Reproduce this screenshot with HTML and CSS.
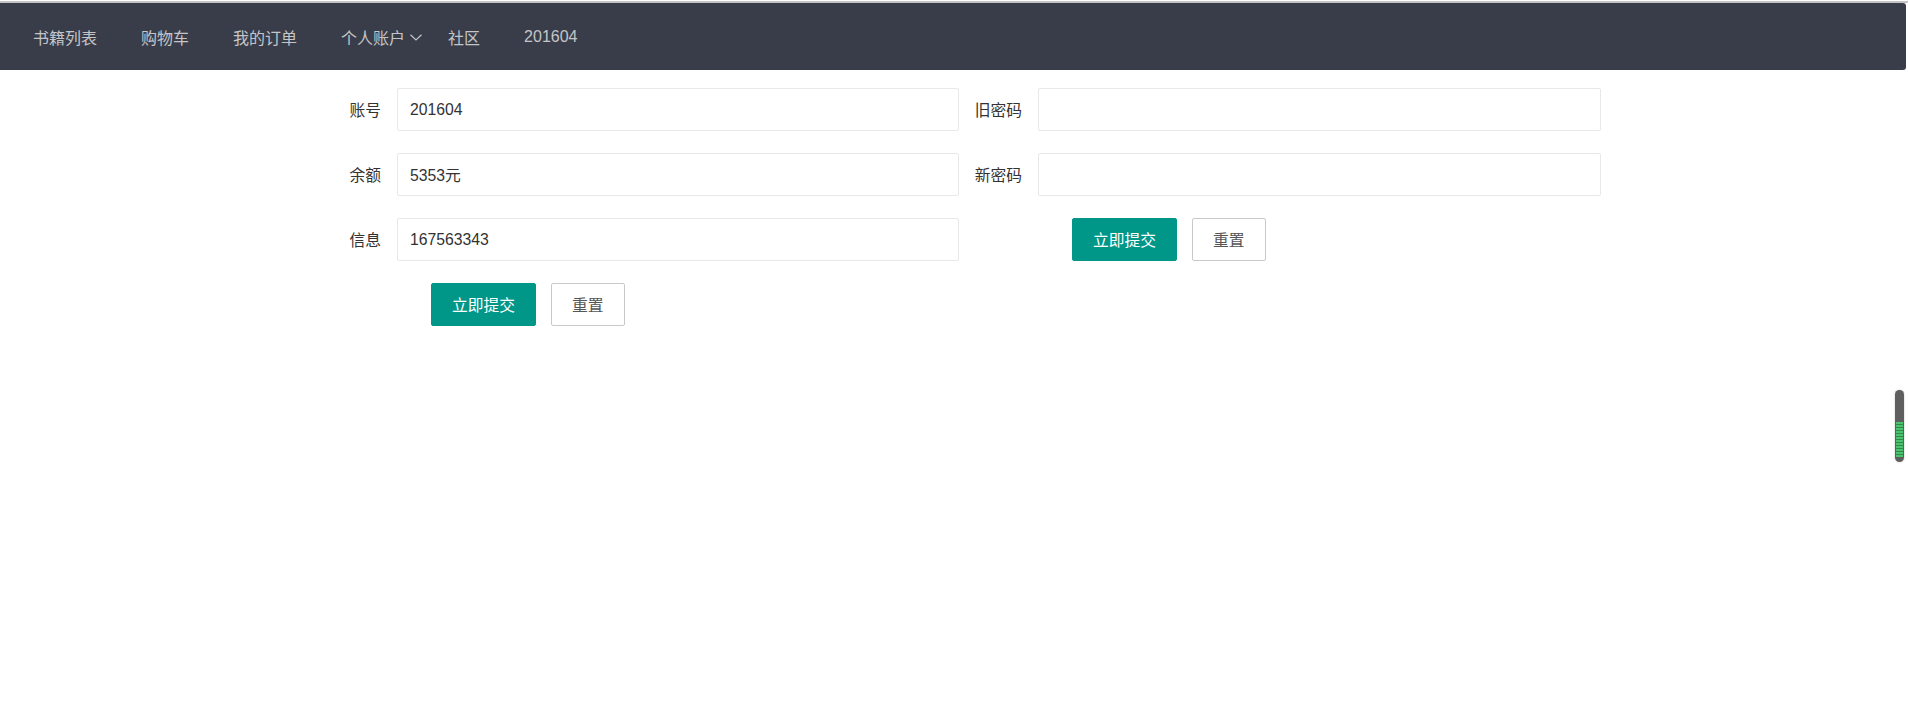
FILE: index.html
```html
<!DOCTYPE html>
<html lang="zh-CN">
<head>
<meta charset="utf-8">
<title>个人账户</title>
<link rel="stylesheet" href="styles.css">
</head>
<body>
<div class="topline"></div>
<ul class="nav">
  <li class="nav-item"><a>书籍列表</a></li>
  <li class="nav-item"><a>购物车</a></li>
  <li class="nav-item"><a>我的订单</a></li>
  <li class="nav-item more"><a>个人账户<svg class="chev" width="12" height="7" viewBox="0 0 12 7"><polyline points="0.5,0.8 6,6 11.5,0.8" fill="none" stroke="#c4c5c8" stroke-width="1.2"/></svg></a></li>
  <li class="nav-item"><a>社区</a></li>
  <li class="nav-item"><a>201604</a></li>
</ul>

<form class="form">
  <label class="label">账号</label>
  <div class="field"><input class="input" type="text" value="201604"></div>
  <label class="label">旧密码</label>
  <div class="field"><input class="input" type="password"></div>

  <label class="label">余额</label>
  <div class="field"><input class="input" type="text" value="5353元"></div>
  <label class="label">新密码</label>
  <div class="field"><input class="input" type="password"></div>

  <label class="label">信息</label>
  <div class="field"><input class="input" type="text" value="167563343"></div>
  <div></div>
  <div class="btns"><button type="button" class="btn">立即提交</button><button type="button" class="btn btn-plain">重置</button></div>

  <div></div>
  <div class="btns"><button type="button" class="btn">立即提交</button><button type="button" class="btn btn-plain">重置</button></div>
</form>

<div class="widget"><div class="widget-top"></div><div class="widget-green"></div></div>
</body>
</html>
```
FILE: styles.css
```css
html, body {
  margin: 0;
  padding: 0;
  background: #fff;
  font-family: "Liberation Sans", "Noto Sans CJK SC", sans-serif;
  font-size: 15.75px;
  color: #333;
}
.topline {
  height: 2px;
  margin-top: 1px;
  background: #c4c4c4;
}
.nav {
  list-style: none;
  margin: 0 2px 0 0;
  padding: 0 0 0 11px;
  height: 67px;
  background: #393d49;
  border-radius: 0 3px 3px 0;
  display: flex;
  font-size: 16px;
}
.nav-item a {
  display: flex;
  align-items: center;
  height: 67px;
  padding: 0 22px;
  color: #c4c5c8;
  white-space: nowrap;
}
.nav-item.more a {
  padding-right: 4px;
}
.chev {
  margin-left: 5px;
  margin-top: 1px;
}
.form {
  display: grid;
  grid-template-columns: 90px 562px 79px 563px;
  row-gap: 22px;
  margin: 18px 0 0 307px;
}
.label {
  display: flex;
  align-items: center;
  justify-content: flex-end;
  padding-right: 16px;
  height: 43px;
  color: #333;
  white-space: nowrap;
}
.field {
  height: 43px;
}
.input {
  box-sizing: border-box;
  width: 100%;
  height: 43px;
  border: 1px solid #e8e8e8;
  border-radius: 2px;
  padding: 0 12px;
  font-family: "Liberation Sans", "Noto Sans CJK SC", sans-serif;
  font-size: 15.75px;
  color: #333;
  background: #fff;
  outline: none;
}
.btns {
  display: flex;
  gap: 15px;
  padding-left: 34px;
}
.btn {
  box-sizing: border-box;
  height: 43px;
  padding: 0 20px;
  border: 1px solid #009688;
  border-radius: 2px;
  background: #009688;
  color: #fff;
  font-family: "Liberation Sans", "Noto Sans CJK SC", sans-serif;
  font-size: 15.75px;
  white-space: nowrap;
}
.btn-plain {
  background: #fff;
  border-color: #c9c9c9;
  color: #555;
}
.widget {
  position: absolute;
  left: 1895px;
  top: 390px;
  width: 9px;
  height: 72px;
  border-radius: 5px;
  background: #5f5f5f;
  box-shadow: 0 0 2px rgba(0,0,0,0.25);
  display: flex;
  flex-direction: column;
  overflow: hidden;
}
.widget-top {
  height: 32px;
}
.widget-green {
  height: 35px;
  margin: 0 1px;
  background: repeating-linear-gradient(to bottom, #4cc36e 0, #4cc36e 2px, #2f8a4b 2px, #2f8a4b 3px);
}
```
